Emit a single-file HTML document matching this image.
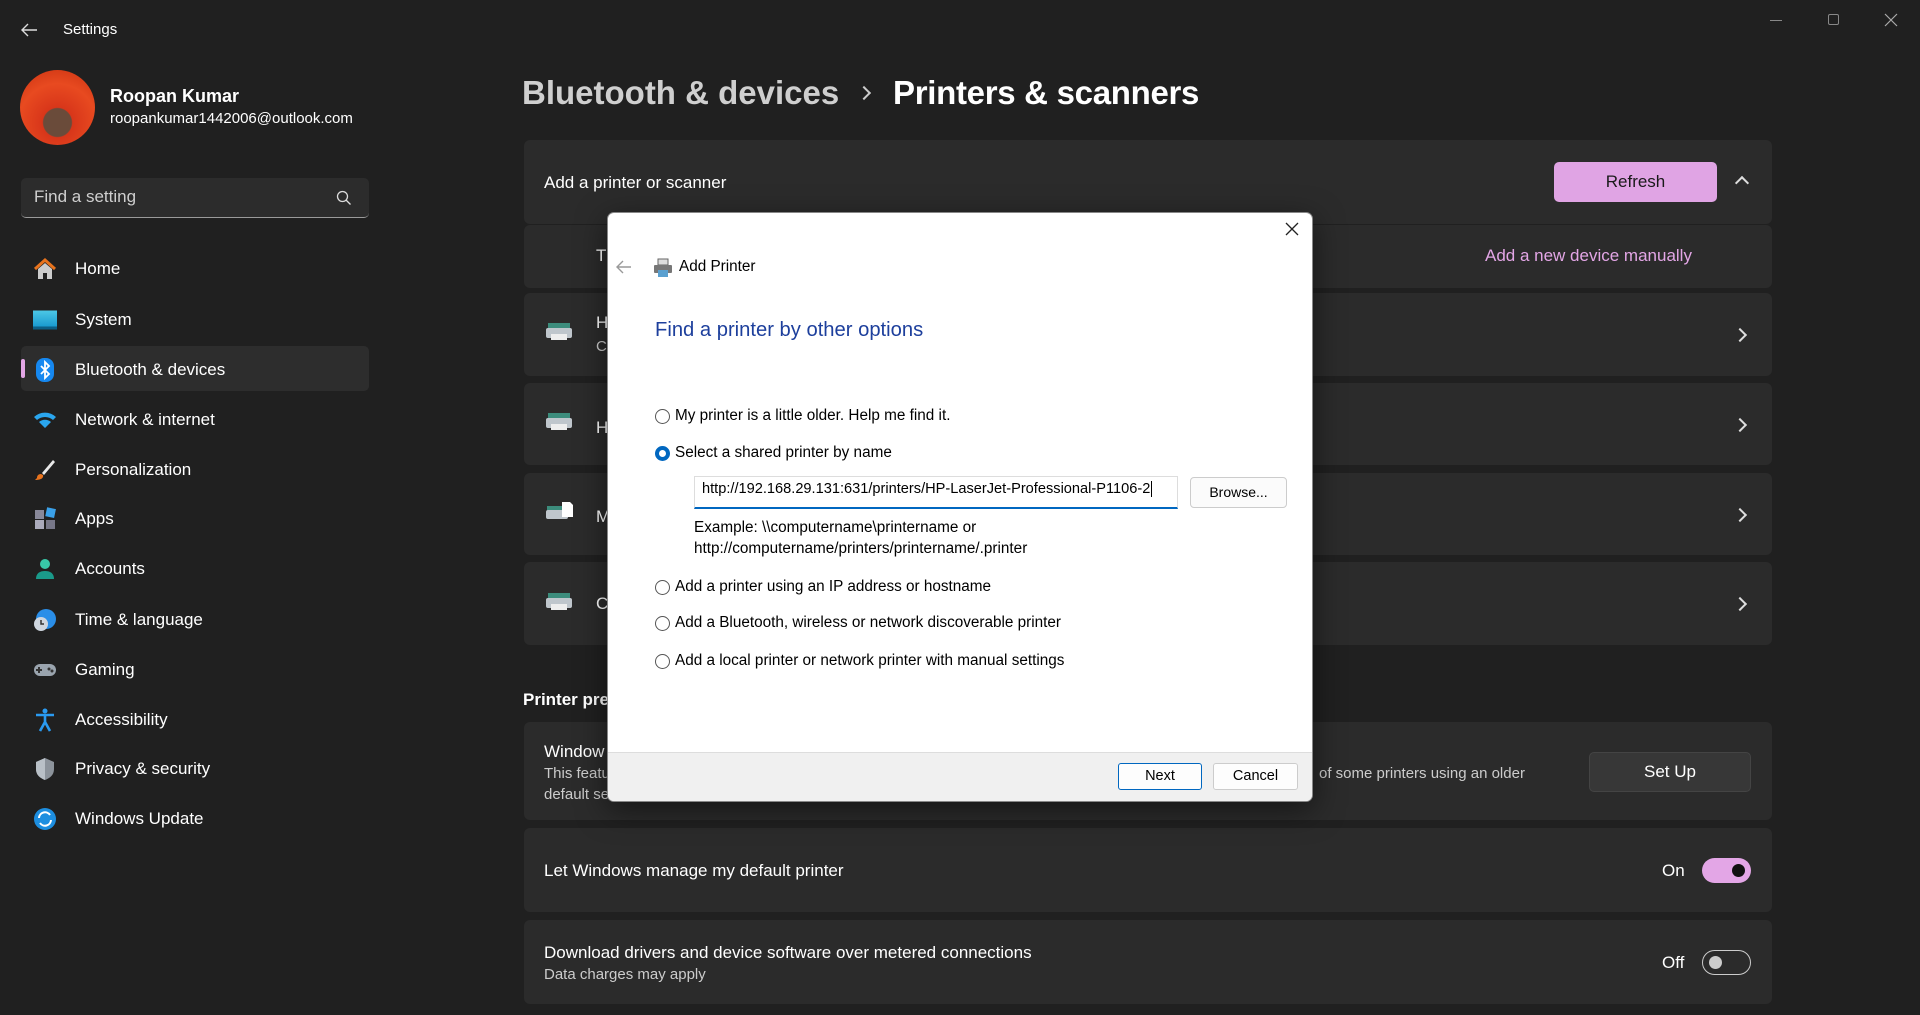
<!DOCTYPE html>
<html><head><meta charset="utf-8"><style>
*{margin:0;padding:0;box-sizing:border-box}
body{width:1920px;height:1015px;background:#202020;font-family:"Segoe UI","Liberation Sans",sans-serif;color:#fff;position:relative;overflow:hidden}
.a{position:absolute;white-space:nowrap}
.nav{position:absolute;left:75px;font-size:17px;transform:translateY(-50%)}
.ic{position:absolute;left:33px;width:24px;height:24px;transform:translateY(-50%)}
.card{position:absolute;left:524px;width:1248px;background:#2b2b2b;border-radius:6px}
.t{font-size:17px}
.chev{position:absolute;left:1735px;width:10px;height:10px;border-right:2px solid #ddd;border-top:2px solid #ddd;transform:rotate(45deg)}
.pr{position:absolute;left:545px;width:28px;height:18px}
.d{font-family:"Liberation Sans",sans-serif;color:#000;font-size:15.3px}
.rad{position:absolute;left:655px;width:15px;height:15px;border:1px solid #555;border-radius:50%;background:#fff}
.tg{position:absolute;left:1702px;width:49px;height:25px;border-radius:13px}
</style></head><body>
<svg class="a" style="left:20px;top:22px" width="18" height="16"><path d="M17 8H2M8 2L2 8l6 6" stroke="#ddd" stroke-width="1.4" fill="none"/></svg>
<div class="a" style="left:63px;top:21px;font-size:15px">Settings</div>
<div class="a" style="left:1770px;top:20px;width:12px;height:1px;background:#888"></div>
<div class="a" style="left:1828px;top:14px;width:11px;height:11px;border:1px solid #888;border-radius:2px"></div>
<svg class="a" style="left:1884px;top:13px" width="14" height="14"><path d="M1 1l12 12M13 1L1 13" stroke="#aaa" stroke-width="1.2"/></svg>
<div class="a" style="left:20px;top:70px;width:75px;height:75px;border-radius:50%;background:radial-gradient(circle at 50% 70%,#6a4b3a 0 14px,#d8361a 15px,#e84a20 60%,#c83010)"></div>
<div class="a" style="left:110px;top:86px;font-size:18px;font-weight:bold">Roopan Kumar</div>
<div class="a" style="left:110px;top:110px;font-size:15px">roopankumar1442006@outlook.com</div>
<div class="a" style="left:21px;top:178px;width:348px;height:40px;background:#2c2c2c;border-radius:5px;border-bottom:1px solid #9a9a9a"></div>
<div class="a" style="left:34px;top:187px;font-size:17px;color:#cfcfcf">Find a setting</div>
<svg class="a" style="left:336px;top:190px" width="16" height="16"><circle cx="6.5" cy="6.5" r="5" stroke="#ddd" stroke-width="1.3" fill="none"/><path d="M10 10l4.5 4.5" stroke="#ddd" stroke-width="1.3"/></svg>
<div class="a" style="left:21px;top:346px;width:348px;height:45px;background:#2d2d2d;border-radius:5px"></div>
<div class="a" style="left:21px;top:359px;width:4px;height:19px;background:#e3a6e6;border-radius:2px"></div>
<svg class="ic" style="top:269px" viewBox="0 0 24 24"><path d="M2 12L12 3l10 9" stroke="#e8731d" stroke-width="3" fill="none"/><path d="M5 12v10h5v-6h4v6h5V12L12 6z" fill="#ccc"/></svg>
<div class="ic" style="top:320px;background:linear-gradient(#4cc7e6,#1a9bd0);height:19px;border-bottom:3px solid #0c5f86"></div>
<svg class="ic" style="top:370px" viewBox="0 0 24 24"><rect x="3" y="0" width="18" height="24" rx="8" fill="#1688f0"/><path d="M8 8l8 8-4 4V4l4 4-8 8" stroke="#fff" stroke-width="1.8" fill="none"/></svg>
<svg class="ic" style="top:420px" viewBox="0 0 24 24"><path d="M1 9a16 16 0 0122 0l-3 3a12 12 0 00-16 0zM6 14a9 9 0 0112 0l-6 6z" fill="#2aa6ef"/></svg>
<svg class="ic" style="top:470px" viewBox="0 0 24 24"><path d="M20 2L9 15l2 2L22 4z" fill="#e9e9e9"/><path d="M8 16c-3 0-4 2-4 4l-2 2c4 0 9-1 8-5z" fill="#e8731d"/></svg>
<svg class="ic" style="top:519px" viewBox="0 0 24 24"><rect x="2" y="3" width="9" height="9" fill="#889"/><rect x="13" y="1" width="9" height="9" fill="#3aa0e8" transform="rotate(12 17 6)"/><rect x="2" y="13" width="9" height="9" fill="#aab"/><rect x="13" y="13" width="9" height="9" fill="#778"/></svg>
<svg class="ic" style="top:569px" viewBox="0 0 24 24"><circle cx="12" cy="7" r="5" fill="#38c8a8"/><path d="M3 22c0-6 4-8 9-8s9 2 9 8z" fill="#1a9a8a"/></svg>
<svg class="ic" style="top:620px" viewBox="0 0 24 24"><circle cx="13" cy="11" r="10" fill="#2a8ee8"/><circle cx="8" cy="16" r="7" fill="#cfd6df"/><path d="M8 12v4h3" stroke="#333" stroke-width="1.5" fill="none"/></svg>
<svg class="ic" style="top:670px" viewBox="0 0 24 24"><rect x="1" y="6" width="22" height="12" rx="6" fill="#9aa4ae"/><path d="M6 9v6M3 12h6" stroke="#333" stroke-width="2"/><circle cx="16" cy="11" r="1.5" fill="#333"/><circle cx="19" cy="13" r="1.5" fill="#333"/></svg>
<svg class="ic" style="top:720px" viewBox="0 0 24 24"><circle cx="12" cy="3" r="2.5" fill="#2a9af0"/><path d="M3 7h18M12 7v7l-5 9M12 14l5 9" stroke="#2a9af0" stroke-width="2.6" fill="none"/></svg>
<svg class="ic" style="top:769px" viewBox="0 0 24 24"><path d="M12 1l9 4v7c0 6-4 9-9 11-5-2-9-5-9-11V5z" fill="#8c939b"/><path d="M12 1v22c-5-2-9-5-9-11V5z" fill="#b9c0c7"/></svg>
<svg class="ic" style="top:819px" viewBox="0 0 24 24"><circle cx="12" cy="12" r="11" fill="#1d8ee0"/><path d="M6 11a6 6 0 0111-3M18 13a6 6 0 01-11 3" stroke="#fff" stroke-width="2" fill="none"/></svg>
<div class="nav" style="top:269px">Home</div>
<div class="nav" style="top:320px">System</div>
<div class="nav" style="top:370px">Bluetooth &amp; devices</div>
<div class="nav" style="top:420px">Network &amp; internet</div>
<div class="nav" style="top:470px">Personalization</div>
<div class="nav" style="top:519px">Apps</div>
<div class="nav" style="top:569px">Accounts</div>
<div class="nav" style="top:620px">Time &amp; language</div>
<div class="nav" style="top:670px">Gaming</div>
<div class="nav" style="top:720px">Accessibility</div>
<div class="nav" style="top:769px">Privacy &amp; security</div>
<div class="nav" style="top:819px">Windows Update</div>
<div class="a" style="left:522px;top:74px;font-size:33px;color:#cfcfcf;font-weight:600">Bluetooth &amp; devices</div>
<div class="a" style="left:859px;top:88px;width:10px;height:10px;border-right:2px solid #ccc;border-top:2px solid #ccc;transform:rotate(45deg)"></div>
<div class="a" style="left:893px;top:74px;font-size:33px;font-weight:600;letter-spacing:-0.3px">Printers &amp; scanners</div>
<div class="card" style="top:140px;height:84px"></div>
<div class="card" style="top:225px;height:63px"></div>
<div class="a t" style="left:544px;top:173px">Add a printer or scanner</div>
<div class="a" style="left:1554px;top:162px;width:163px;height:40px;background:#e0a4e4;border-radius:5px;color:#1a1a1a;font-size:17px;text-align:center;line-height:40px">Refresh</div>
<div class="a" style="left:1737px;top:178px;width:10px;height:10px;border-left:2px solid #ddd;border-top:2px solid #ddd;transform:rotate(45deg)"></div>
<div class="a t" style="left:596px;top:246px">T</div>
<div class="a t" style="left:1485px;top:246px;color:#e3a6e6">Add a new device manually</div>
<div class="card" style="top:293px;height:83px"></div>
<div class="card" style="top:383px;height:82px"></div>
<div class="card" style="top:473px;height:82px"></div>
<div class="card" style="top:562px;height:83px"></div>
<svg class="pr" style="top:323px" viewBox="0 0 28 18"><rect x="3" y="0" width="22" height="6" fill="#3c8c7c"/><rect x="1" y="5" width="26" height="10" rx="2" fill="#bfc6cc"/><rect x="6" y="11" width="16" height="6" fill="#eee"/></svg>
<svg class="pr" style="top:413px" viewBox="0 0 28 18"><rect x="3" y="0" width="22" height="6" fill="#3c8c7c"/><rect x="1" y="5" width="26" height="10" rx="2" fill="#bfc6cc"/><rect x="6" y="11" width="16" height="6" fill="#eee"/></svg>
<svg class="pr" style="top:502px" viewBox="0 0 28 18"><rect x="2" y="4" width="20" height="6" fill="#3c8c7c"/><rect x="1" y="8" width="22" height="9" rx="2" fill="#bfc6cc"/><path d="M17 0h8l3 3v12H17z" fill="#fff"/></svg>
<svg class="pr" style="top:593px" viewBox="0 0 28 18"><rect x="3" y="0" width="22" height="6" fill="#3c8c7c"/><rect x="1" y="5" width="26" height="10" rx="2" fill="#bfc6cc"/><rect x="6" y="11" width="16" height="6" fill="#eee"/></svg>
<div class="a t" style="left:596px;top:313px">H</div>
<div class="a" style="left:596px;top:338px;font-size:15px;color:#ccc">C</div>
<div class="a t" style="left:596px;top:418px">H</div>
<div class="a t" style="left:596px;top:507px">M</div>
<div class="a t" style="left:596px;top:594px">C</div>
<div class="chev" style="top:330px"></div>
<div class="chev" style="top:420px"></div>
<div class="chev" style="top:510px"></div>
<div class="chev" style="top:599px"></div>
<div class="a" style="left:523px;top:690px;font-size:17px;font-weight:bold">Printer pre</div>
<div class="card" style="top:722px;height:98px"></div>
<div class="a t" style="left:544px;top:742px">Window</div>
<div class="a" style="left:544px;top:765px;font-size:15px;color:#ccc">This featu</div>
<div class="a" style="left:544px;top:786px;font-size:15px;color:#ccc">default se</div>
<div class="a" style="left:1319px;top:765px;font-size:15px;color:#ccc">of some printers using an older</div>
<div class="a" style="left:1589px;top:752px;width:162px;height:40px;background:#373737;border-radius:5px;border:1px solid #444;text-align:center;line-height:38px;font-size:17px">Set Up</div>
<div class="card" style="top:828px;height:84px"></div>
<div class="a t" style="left:544px;top:861px">Let Windows manage my default printer</div>
<div class="a t" style="left:1662px;top:861px">On</div>
<div class="tg" style="top:858px;background:#e3a6e6"><div class="a" style="left:30px;top:6px;width:13px;height:13px;border-radius:50%;background:#111"></div></div>
<div class="card" style="top:920px;height:84px"></div>
<div class="a t" style="left:544px;top:943px">Download drivers and device software over metered connections</div>
<div class="a" style="left:544px;top:966px;font-size:15px;color:#ccc">Data charges may apply</div>
<div class="a t" style="left:1662px;top:953px">Off</div>
<div class="tg" style="top:950px;border:1px solid #ccc"><div class="a" style="left:6px;top:5px;width:13px;height:13px;border-radius:50%;background:#ccc"></div></div>
<div class="a" style="left:607px;top:212px;width:706px;height:590px;background:#fff;border:1px solid #888;border-radius:7px;overflow:hidden;box-shadow:0 8px 30px rgba(0,0,0,.5)">
  <div class="a" style="left:0;top:539px;width:706px;height:52px;background:#f0f0f0;border-top:1px solid #ddd"></div>
</div>
<svg class="a" style="left:1285px;top:222px" width="14" height="14"><path d="M1 1l12 12M13 1L1 13" stroke="#222" stroke-width="1.3"/></svg>
<svg class="a" style="left:616px;top:260px" width="16" height="14"><path d="M15 7H2M7 1L1 7l6 6" stroke="#999" stroke-width="1.4" fill="none"/></svg>
<svg class="a" style="left:653px;top:258px" width="20" height="20"><rect x="5" y="1" width="10" height="6" fill="#ddd" stroke="#666"/><rect x="1" y="7" width="18" height="8" rx="1" fill="#777"/><rect x="5" y="12" width="10" height="7" fill="#5aa0d0"/></svg>
<div class="a d" style="left:679px;top:258px">Add Printer</div>
<div class="a" style="left:655px;top:319px;font-size:20.2px;color:#1d3f9c;font-family:'Liberation Sans',sans-serif">Find a printer by other options</div>
<div class="rad" style="top:409px"></div>
<div class="a d" style="left:675px;top:407px">My printer is a little older. Help me find it.</div>
<div class="rad" style="top:446px;border:4px solid #0067c0"></div>
<div class="a d" style="left:675px;top:444px">Select a shared printer by name</div>
<div class="a" style="left:694px;top:476px;width:484px;height:33px;border:1px solid #ddd;border-bottom:2px solid #0067c0"></div>
<div class="a d" style="left:702px;top:481px;font-size:14.6px">http://192.168.29.131:631/printers/HP-LaserJet-Professional-P1106-2<span style="border-left:1px solid #000;margin-left:1px"></span></div>
<div class="a d" style="left:1190px;top:477px;width:97px;height:31px;border:1px solid #ccc;border-radius:4px;background:#fbfbfb;text-align:center;line-height:29px;font-size:14px">Browse...</div>
<div class="a d" style="left:694px;top:519px">Example: \\computername\printername or</div>
<div class="a d" style="left:694px;top:540px">http://computername/printers/printername/.printer</div>
<div class="rad" style="top:580px"></div>
<div class="a d" style="left:675px;top:578px">Add a printer using an IP address or hostname</div>
<div class="rad" style="top:616px"></div>
<div class="a d" style="left:675px;top:614px">Add a Bluetooth, wireless or network discoverable printer</div>
<div class="rad" style="top:654px"></div>
<div class="a d" style="left:675px;top:652px">Add a local printer or network printer with manual settings</div>
<div class="a d" style="left:1118px;top:763px;width:84px;height:27px;border:1px solid #0067c0;border-radius:3px;background:#fdfdfd;text-align:center;line-height:25px;font-size:14.5px">Next</div>
<div class="a d" style="left:1213px;top:763px;width:85px;height:27px;border:1px solid #ccc;border-radius:3px;background:#fdfdfd;text-align:center;line-height:25px;font-size:14.5px">Cancel</div>
</body></html>
